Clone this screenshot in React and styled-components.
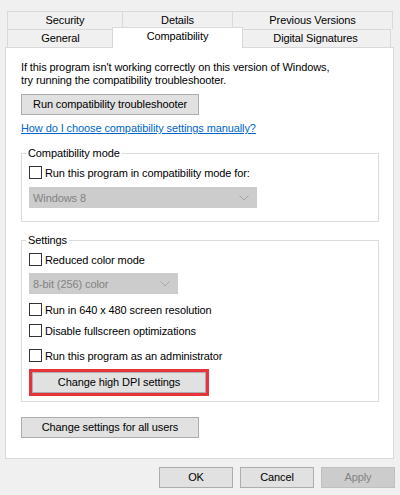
import React from "react";
import styled, { createGlobalStyle } from "styled-components";

const Global = createGlobalStyle`
  html, body { margin: 0; padding: 0; background: #f0f0f0; }
  body {
    font-family: "Liberation Sans", Arial, sans-serif;
    font-size: 11px;
    letter-spacing: -0.1px;
    color: #000;
    width: 400px;
    height: 495px;
    overflow: hidden;
  }
  * { box-sizing: border-box; }
`;

const Window = styled.div`
  padding-top: 11px;
  width: 400px;
`;

const TabRow = styled.div`
  display: flex;
  align-items: flex-start;
  height: 18px;
  margin-left: 7px;
`;

const Tab = styled.div`
  width: ${(p) => p.$w}px;
  height: 18px;
  margin-left: ${(p) => (p.$first ? 0 : -1)}px;
  border: 1px solid #d9d9d9;
  border-bottom: none;
  background: #f0f0f0;
  text-align: center;
  line-height: 17px;
  white-space: nowrap;
`;

const ActiveTab = styled(Tab)`
  position: relative;
  z-index: 1;
  height: 21px;
  margin-top: -2px;
  margin-left: -2px;
  margin-right: -2px;
  background: #fff;
  line-height: 17px;
`;

const Panel = styled.div`
  margin-left: 5px;
  width: 389px;
  height: 412px;
  background: #fff;
  border: 1px solid #d9d9d9;
  padding: 13px 13px 0 15px;
  display: flex;
  flex-direction: column;
  align-items: flex-start;
`;

const Intro = styled.p`
  margin: 0;
  line-height: 13px;
`;

const Button = styled.button`
  font: inherit;
  letter-spacing: inherit;
  color: ${(p) => (p.disabled ? "#838383" : "#000")};
  width: ${(p) => p.$w}px;
  height: 21px;
  margin: ${(p) => p.$mt || 0}px 0 0 0;
  padding: 0;
  background: ${(p) => (p.disabled ? "#cccccc" : "#e1e1e1")};
  border: 1px solid ${(p) => (p.disabled ? "#bfbfbf" : "#adadad")};
  border-radius: 0;
  line-height: 19px;
  text-align: center;
`;

const Link = styled.a`
  margin-top: 6px;
  line-height: 14px;
  color: #0066cc;
  text-decoration: underline;
  cursor: pointer;
`;

const Group = styled.fieldset`
  margin: ${(p) => p.$mt}px 0 0 0;
  width: 358px;
  border: 1px solid #dcdcdc;
  padding: 5px 7px ${(p) => p.$pb}px 7px;
  display: flex;
  flex-direction: column;
  align-items: flex-start;
`;

const Legend = styled.legend`
  padding: 0 2px;
  margin-left: -3px;
  line-height: 14px;
`;

const CheckRow = styled.label`
  display: flex;
  align-items: center;
  height: 15px;
  margin-top: ${(p) => p.$mt || 0}px;
  white-space: nowrap;
`;

const Box = styled.span`
  width: 13px;
  height: 13px;
  border: 1px solid #333;
  background: #fff;
  margin-right: 3px;
  flex: none;
`;

const Select = styled.div`
  width: ${(p) => p.$w}px;
  height: 21px;
  margin-top: ${(p) => p.$mt}px;
  background: #cccccc;
  border: 1px solid #cccccc;
  color: #838383;
  display: flex;
  align-items: center;
  justify-content: space-between;
  padding: 0 7px 0 3px;
`;

const Highlight = styled.div`
  margin-top: 6px;
  border: 3px solid #e5343c;
  display: flex;
`;

const Footer = styled.div`
  display: flex;
  justify-content: flex-end;
  gap: 7px;
  margin-top: 8px;
  padding-right: 5px;
`;

const Chevron = () => (
  <svg width="10" height="6" viewBox="0 0 10 6">
    <polyline points="0.5,0.5 5,5 9.5,0.5" fill="none" stroke="#a6a6a6" strokeWidth="1" />
  </svg>
);

const Check = ({ children, mt }) => (
  <CheckRow $mt={mt}>
    <Box />
    {children}
  </CheckRow>
);

export default function App() {
  return (
    <Window>
      <Global />
      <TabRow>
        <Tab $w={116} $first>Security</Tab>
        <Tab $w={111}>Details</Tab>
        <Tab $w={161}>Previous Versions</Tab>
      </TabRow>
      <TabRow>
        <Tab $w={107} $first>General</Tab>
        <ActiveTab $w={131}>Compatibility</ActiveTab>
        <Tab $w={151}>Digital Signatures</Tab>
      </TabRow>
      <Panel>
        <Intro>
          If this program isn't working correctly on this version of Windows,
          <br />
          try running the compatibility troubleshooter.
        </Intro>
        <Button $w={178} $mt={7}>Run compatibility troubleshooter</Button>
        <Link>How do I choose compatibility settings manually?</Link>
        <Group $mt={11} $pb={13}>
          <Legend>Compatibility mode</Legend>
          <Check>Run this program in compatibility mode for:</Check>
          <Select $w={228} $mt={7}>
            <span>Windows 8</span>
            <Chevron />
          </Select>
        </Group>
        <Group $mt={11} $pb={5}>
          <Legend>Settings</Legend>
          <Check>Reduced color mode</Check>
          <Select $w={149} $mt={6}>
            <span>8-bit (256) color</span>
            <Chevron />
          </Select>
          <Check mt={8}>Run in 640 x 480 screen resolution</Check>
          <Check mt={6}>Disable fullscreen optimizations</Check>
          <Check mt={10}>Run this program as an administrator</Check>
          <Highlight>
            <Button $w={174}>Change high DPI settings</Button>
          </Highlight>
        </Group>
        <Button $w={178} $mt={15}>Change settings for all users</Button>
      </Panel>
      <Footer>
        <Button $w={74}>OK</Button>
        <Button $w={74}>Cancel</Button>
        <Button $w={74} disabled>Apply</Button>
      </Footer>
    </Window>
  );
}
